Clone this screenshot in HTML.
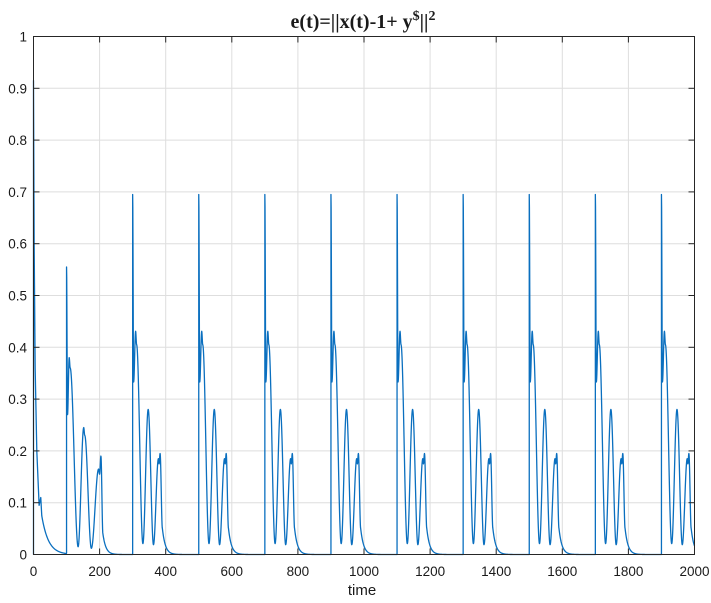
<!DOCTYPE html>
<html><head><meta charset="utf-8"><style>
html,body{margin:0;padding:0;background:#fff;}
svg{display:block}
text{font-family:"Liberation Sans",Arial,sans-serif;font-size:13.5px;fill:#1a1a1a}
</style></head><body>
<svg id="s" width="711" height="603" viewBox="0 0 711 603" xmlns="http://www.w3.org/2000/svg">
<g id="grid" stroke="#dedede" stroke-width="1"></g>
<path id="curve" fill="none" stroke="#0a6fbf" stroke-width="1.3" stroke-linejoin="round"/>
<rect x="33.5" y="36.5" width="661" height="518" fill="none" stroke="#262626" stroke-width="1"/>
<g id="ticks" stroke="#262626" stroke-width="1"></g>
<g id="labels"></g>
<text x="362" y="595" text-anchor="middle" style="font-size:15px">time</text>
<text x="363" y="28" text-anchor="middle" style="font-family:'Liberation Serif',serif;font-weight:bold;font-size:20px">e(t)=||x(t)-1+ y<tspan dy="-8" style="font-size:14px">$</tspan><tspan dy="8">||</tspan><tspan dy="-8" style="font-size:14px">2</tspan></text>
</svg>
<script>
var L=33.5,R=694.5,T=36.5,B=554.5;
function X(t){return L+(R-L)*t/2000}
function Y(v){return B-(B-T)*v}
var ns="http://www.w3.org/2000/svg";
function el(p,n,a,txt){var e=document.createElementNS(ns,n);for(var k in a)e.setAttribute(k,a[k]);if(txt!==undefined)e.textContent=txt;document.getElementById(p).appendChild(e);}
for(var i=1;i<10;i++){var x=X(i*200);el('grid','line',{x1:x,y1:T,x2:x,y2:B});}
for(var i=1;i<10;i++){var y=Y(i/10);el('grid','line',{x1:L,y1:y,x2:R,y2:y});}
for(var i=0;i<=10;i++){var x=X(i*200);el('ticks','line',{x1:x,y1:B,x2:x,y2:B-6});el('ticks','line',{x1:x,y1:T,x2:x,y2:T+6});
 el('labels','text',{x:x,y:576,'text-anchor':'middle'},String(i*200));}
for(var i=0;i<=10;i++){var y=Y(i/10);el('ticks','line',{x1:L,y1:y,x2:L+6,y2:y});el('ticks','line',{x1:R,y1:y,x2:R-6,y2:y});
 el('labels','text',{x:27,y:y+5,'text-anchor':'end'},i==0?'0':(i==10?'1':(i/10).toFixed(1)));}
function interp(k,t,cos){for(var i=0;i<k.length-1;i++){if(t>=k[i][0]&&t<=k[i+1][0]){var a=k[i],b=k[i+1];var f=(t-a[0])/(b[0]-a[0]||1);if(cos)f=(1-Math.cos(Math.PI*f))/2;return a[1]+(b[1]-a[1])*f;}}return null;}
var reg=[[0,0.695],[3,0.333],[9,0.431],[12,0.405],[31,0.021],[47,0.28],[63,0.019],[78,0.185],[80,0.175],[83,0.195],[90,0.05]];
var first=[[0,0.555],[3,0.27],[8,0.38],[11,0.36],[35,0.015],[52,0.245],[55,0.23],[75,0.012],[97,0.165],[100,0.155],[104,0.19],[110,0.04]];
var init=[[0,0.915],[2,0.6],[5,0.36],[10,0.2],[17,0.095],[22,0.11],[25,0.075]];
var pts=[];
// initial
for(var t=0;t<100;t+=0.5){var v;if(t<=25)v=interp(init,t,false);else v=0.075*Math.exp(-(t-25)/20);pts.push([t,v]);}
pts.push([100,0.003]);
function pulse(k,t0,end,tEnd){pts.push([t0,k[0][1]]);var last=k[k.length-1];
 for(var d=0.5;t0+d<=Math.min(tEnd,2000);d+=0.5){var v;if(d<=last[0])v=interp(k,d,true);else v=last[1]*Math.exp(-(d-last[0])/9);pts.push([t0+d,v]);}}
pulse(first,100,110,300);
pts.push([300,0.001]);
for(var p=300;p<2000;p+=200){pulse(reg,p,90,p+200);if(p+200<2000)pts.push([p+200,0.0005]);}
var d='M'+X(0).toFixed(2)+','+Y(0).toFixed(2);
for(var i=0;i<pts.length;i++)d+='L'+X(pts[i][0]).toFixed(2)+','+Y(pts[i][1]).toFixed(2);
document.getElementById('curve').setAttribute('d',d);
</script>
</body></html>
